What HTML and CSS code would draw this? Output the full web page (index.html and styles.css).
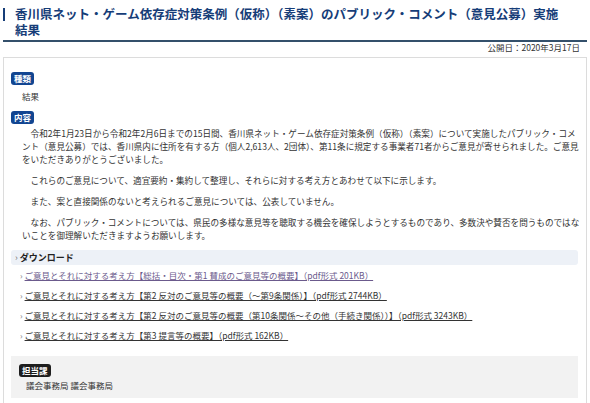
FILE: index.html
```html
<!DOCTYPE html>
<html lang="ja">
<head>
    <meta charset="UTF-8">
    <title>パブリック・コメント実施結果</title>
    <link rel="stylesheet" href="styles.css">
</head>
<body>
<div class="page">
    <h1 class="title"><span class="title-bar"></span>香川県ネット・ゲーム依存症対策条例（仮称）（素案）のパブリック・コメント（意見公募）実施結果</h1>
    <p class="date">公開日：2020年3月17日</p>
    <div class="box">
        <div class="label">種類</div>
        <p class="kind">結果</p>
        <div class="label">内容</div>
        <div class="body">
            <p>令和2年1月23日から令和2年2月6日までの15日間、香川県ネット・ゲーム依存症対策条例（仮称）（素案）について実施したパブリック・コメント（意見公募）では、香川県内に住所を有する方（個人2,613人、2団体）、第11条に規定する事業者71者からご意見が寄せられました。ご意見をいただきありがとうございました。</p>
            <p>これらのご意見について、適宜要約・集約して整理し、それらに対する考え方とあわせて以下に示します。</p>
            <p>また、案と直接関係のないと考えられるご意見については、公表していません。</p>
            <p>なお、パブリック・コメントについては、県民の多様な意見等を聴取する機会を確保しようとするものであり、多数決や賛否を問うものではないことを御理解いただきますようお願いします。</p>
        </div>
        <h2 class="download">ダウンロード</h2>
        <ul class="files">
            <li><a class="visited" href="#">ご意見とそれに対する考え方【総括・目次・第1 賛成のご意見等の概要】（pdf形式 201KB）</a></li>
            <li><a href="#">ご意見とそれに対する考え方【第2 反対のご意見等の概要（～第9条関係）】（pdf形式 2744KB）</a></li>
            <li><a href="#">ご意見とそれに対する考え方【第2 反対のご意見等の概要（第10条関係～その他（手続き関係））】（pdf形式 3243KB）</a></li>
            <li><a href="#">ご意見とそれに対する考え方【第3 提言等の概要】（pdf形式 162KB）</a></li>
        </ul>
        <div class="contact">
            <div class="label label-dark">担当課</div>
            <p>議会事務局 議会事務局</p>
        </div>
    </div>
</div>
</body>
</html>
```

FILE: styles.css
```css
* {
    margin: 0;
    padding: 0;
    box-sizing: border-box;
}

body {
    font-family: "Noto Sans CJK JP", "Noto Sans", sans-serif;
    color: #333;
    background: #fff;
}

.page {
    padding: 0 3px;
}

.title {
    padding: 6px 18px 2px 12px;
    text-indent: -12px;
    border-bottom: 2px solid #34506b;
    font-size: 12.5px;
    line-height: 16px;
    font-weight: bold;
    color: #163d78;
}

.title-bar {
    display: inline-block;
    width: 2px;
    height: 13px;
    margin-right: 10px;
    vertical-align: -2px;
    background: #163d78;
}

.date {
    padding-right: 7px;
    text-align: right;
    font-size: 8.5px;
    line-height: 10px;
}

.box {
    margin-top: 5px;
    padding: 14px 8px 6px 7px;
    border: 1px solid #dcdcdc;
    font-size: 8.5px;
    line-height: 13px;
}

.label {
    display: inline-block;
    padding: 0 3px;
    border-radius: 3px;
    background: #124591;
    color: #fff;
    font-size: 8.5px;
    font-weight: bold;
    line-height: 13px;
}

.label-dark {
    background: #1e1e1e;
}

.kind {
    padding: 5px 0 8px 11px;
}

.body {
    margin-right: -3px;
    padding: 3px 0 0 11px;
    font-size: 8.6px;
}

.body p {
    margin-bottom: 8px;
    text-indent: 1em;
}

.download {
    margin-top: 5px;
    padding: 1px 0 0 4px;
    height: 15px;
    border-radius: 3px;
    background: #edf1f7;
    font-size: 9px;
    line-height: 14px;
    font-weight: bold;
    color: #222;
}

.download::before,
.files li::before {
    content: "›";
    margin-right: 2px;
    font-weight: normal;
    color: #777;
}

.files {
    list-style: none;
    padding-left: 9px;
}

.files li {
    height: 20px;
    line-height: 20px;
}

.files a {
    color: #333;
}

.files a.visited {
    color: #6b5a8c;
}

.contact {
    margin-top: 11px;
    padding: 8px 8px 6px 8px;
    background: #f2f2f2;
}

.contact p {
    padding: 2px 0 0 7px;
}
```
